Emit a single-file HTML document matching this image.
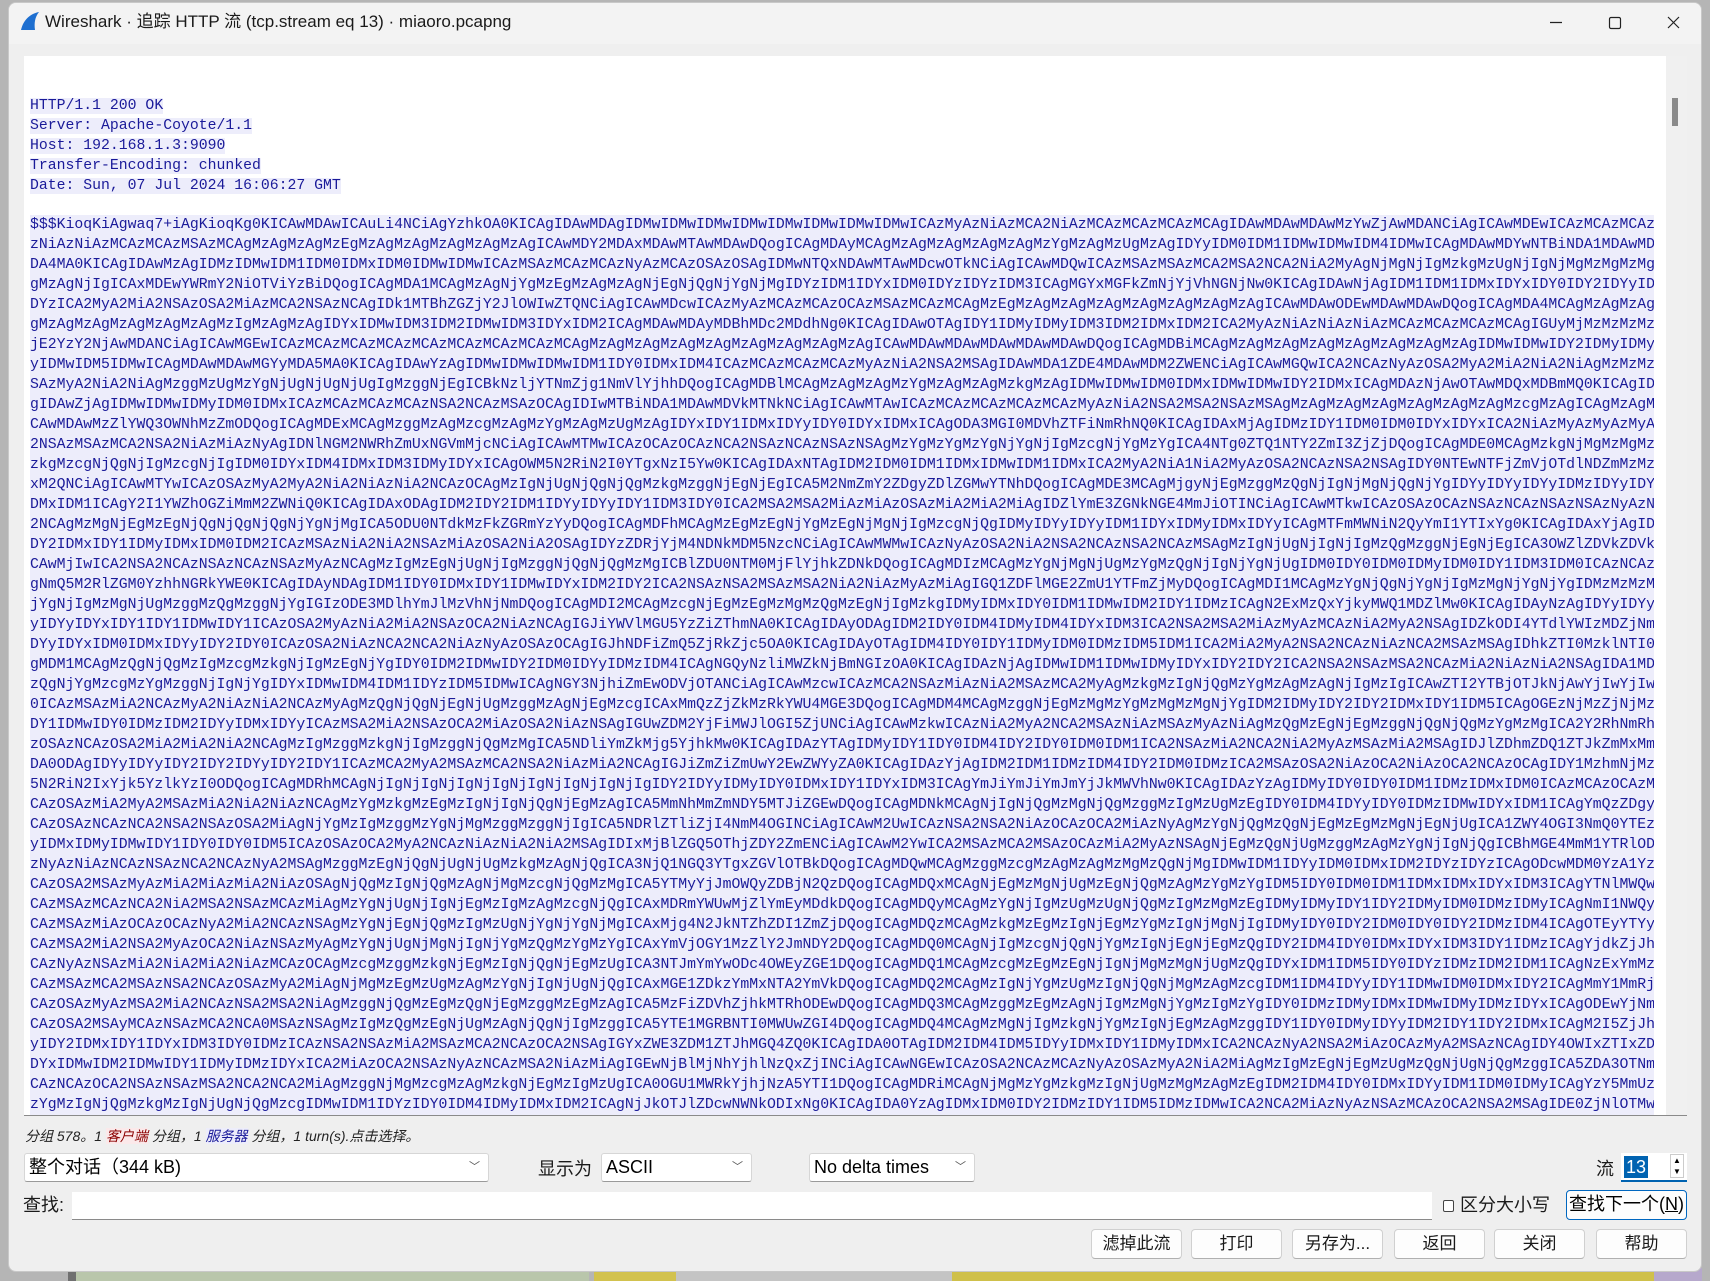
<!DOCTYPE html>
<html><head><meta charset="utf-8">
<style>
*{box-sizing:border-box;margin:0;padding:0}
body{width:1710px;height:1281px;overflow:hidden;background:#b5b5b5;position:relative;font-family:"Liberation Sans","Noto Sans CJK SC",sans-serif}
.strip{position:absolute;top:1268px;height:13px}
.win{position:absolute;left:8px;top:2px;width:1694px;height:1270px;background:#efefef;border:1px solid #c8c8c8;border-radius:8px;overflow:hidden}
.title{position:absolute;left:0;top:0;right:0;height:41px;background:#f3f3f3}
.title .t{position:absolute;left:36px;top:4px;font-size:17px;color:#1a1a1a}
.ctl{position:absolute;top:0;height:41px}
.panel{position:absolute;left:15px;top:53px;width:1663px;height:1060px;background:#fff;border-bottom:1px solid #8a8a8a;overflow:hidden}
.sb{position:absolute;left:1642px;top:0;width:21px;height:1060px;background:#f0f0f0}
.thumb{position:absolute;left:6px;top:42px;width:6px;height:28px;background:#8a8a8a}
.txt{position:absolute;left:6px;top:40px;font-family:"Liberation Mono","DejaVu Sans Mono",monospace;font-size:14.8px;line-height:20px;color:#1a1a99;white-space:pre}
.txt span{background:#ededfb}
.b64{position:absolute;left:6px;top:159px;width:1624px;height:901px;font-family:"Liberation Mono","DejaVu Sans Mono",monospace;font-size:14.8px;line-height:20px;color:#1a1a99;white-space:pre;background:#ededfb;overflow:hidden}
.ui{position:absolute;font-size:17px;color:#1a1a1a}
.combo{position:absolute;background:#fff;border:1px solid #d6d6d6;border-bottom:1px solid #9a9a9a;border-radius:3px;font-size:18px;padding:0 0 0 4px;line-height:27px;height:29px}
.combo i{position:absolute;right:8px;top:0;font-style:normal;font-size:11px;color:#555}
.btn{position:absolute;top:1226px;height:30px;background:#fdfdfd;border:1px solid #d0d0d0;border-bottom:1px solid #b0b0b0;border-radius:4px;font-size:17px;text-align:center;line-height:28px;color:#1a1a1a}
</style></head><body>
<div class="strip" style="left:68px;width:8px;background:#707070"></div>
<div class="strip" style="left:76px;width:513px;background:#b9c6ab"></div>
<div class="strip" style="left:594px;width:82px;background:#d2c24e"></div>
<div class="strip" style="left:676px;width:276px;background:#c4c4c4"></div>
<div class="strip" style="left:952px;width:702px;background:#cfc04a"></div>
<div class="strip" style="left:1654px;width:48px;background:#b6a8cc"></div>
<div class="win">
 <div class="title">
  <svg style="position:absolute;left:10px;top:8px" width="22" height="20" viewBox="0 0 22 20"><path d="M2 19 C4 10 10 3 20 1 C16 6 15 12 16 19 Z" fill="#1e6fd0"/></svg>
  <div class="t">Wireshark · 追踪 HTTP 流 (tcp.stream eq 13) · miaoro.pcapng</div>
  <svg class="ctl" style="left:1540px" width="150" height="41"><line x1="1" y1="19.5" x2="13" y2="19.5" stroke="#222" stroke-width="1.2"/><rect x="60.5" y="14.5" width="11" height="11" rx="1.5" fill="none" stroke="#222" stroke-width="1.2"/><path d="M119 14 L130 25 M130 14 L119 25" stroke="#222" stroke-width="1.2"/></svg>
 </div>
 <div class="panel">
  <div class="txt"><span>HTTP/1.1 200 OK</span>
<span>Server: Apache-Coyote/1.1</span>
<span>Host: 192.168.1.3:9090</span>
<span>Transfer-Encoding: chunked</span>
<span>Date: Sun, 07 Jul 2024 16:06:27 GMT</span></div>
  <div class="b64">$$$KioqKiAgwaq7+iAgKioqKg0KICAwMDAwICAuLi4NCiAgYzhkOA0KICAgIDAwMDAgIDMwIDMwIDMwIDMwIDMwIDMwIDMwIDMwICAzMyAzNiAzMCA2NiAzMCAzMCAzMCAzMCAgIDAwMDAwMDAwMzYwZjAwMDANCiAgICAwMDEwICAzMCAzMCAzMCAzMCAz
zNiAzNiAzMCAzMCAzMSAzMCAgMzAgMzAgMzEgMzAgMzAgMzAgMzAgMzAgICAwMDY2MDAxMDAwMTAwMDAwDQogICAgMDAyMCAgMzAgMzAgMzAgMzAgMzYgMzAgMzUgMzAgIDYyIDM0IDM1IDMwIDMwIDM4IDMwICAgMDAwMDYwNTBiNDA1MDAwMDAw
DA4MA0KICAgIDAwMzAgIDMzIDMwIDM1IDM0IDMxIDM0IDMwIDMwICAzMSAzMCAzMCAzNyAzMCAzOSAzOSAgIDMwNTQxNDAwMTAwMDcwOTkNCiAgICAwMDQwICAzMSAzMSAzMCA2MSA2NCA2NiA2MyAgNjMgNjIgMzkgMzUgNjIgNjMgMzMgMzMgMzMg
gMzAgNjIgICAxMDEwYWRmY2NiOTViYzBiDQogICAgMDA1MCAgMzAgNjYgMzEgMzAgMzAgNjEgNjQgNjYgNjMgIDYzIDM1IDYxIDM0IDYzIDYzIDM3ICAgMGYxMGFkZmNjYjVhNGNjNw0KICAgIDAwNjAgIDM1IDM1IDMxIDYxIDY0IDY2IDYyIDYy
DYzICA2MyA2MiA2NSAzOSA2MiAzMCA2NSAzNCAgIDk1MTBhZGZjY2JlOWIwZTQNCiAgICAwMDcwICAzMyAzMCAzMCAzOCAzMSAzMCAzMCAgMzEgMzAgMzAgMzAgMzAgMzAgMzAgMzAgICAwMDAwODEwMDAwMDAwDQogICAgMDA4MCAgMzAgMzAgMzAg
gMzAgMzAgMzAgMzAgMzAgMzIgMzAgMzAgIDYxIDMwIDM3IDM2IDMwIDM3IDYxIDM2ICAgMDAwMDAyMDBhMDc2MDdhNg0KICAgIDAwOTAgIDY1IDMyIDMyIDM3IDM2IDMxIDM2ICA2MyAzNiAzNiAzNiAzMCAzMCAzMCAzMCAgIGUyMjMzMzMzMzMz
jE2YzY2NjAwMDANCiAgICAwMGEwICAzMCAzMCAzMCAzMCAzMCAzMCAzMCAzMCAgMzAgMzAgMzAgMzAgMzAgMzAgMzAgMzAgICAwMDAwMDAwMDAwMDAwMDAwDQogICAgMDBiMCAgMzAgMzAgMzAgMzAgMzAgMzAgMzAgIDMwIDMwIDY2IDMyIDMy
yIDMwIDM5IDMwICAgMDAwMDAwMGYyMDA5MA0KICAgIDAwYzAgIDMwIDMwIDMwIDM1IDY0IDMxIDM4ICAzMCAzMCAzMCAzMyAzNiA2NSA2MSAgIDAwMDA1ZDE4MDAwMDM2ZWENCiAgICAwMGQwICA2NCAzNyAzOSA2MyA2MiA2NiA2NiAgMzMzMzMz
SAzMyA2NiA2NiAgMzggMzUgMzYgNjUgNjUgNjUgIgMzggNjEgICBkNzljYTNmZjg1NmVlYjhhDQogICAgMDBlMCAgMzAgMzAgMzYgMzAgMzAgMzkgMzAgIDMwIDMwIDM0IDMxIDMwIDMwIDY2IDMxICAgMDAzNjAwOTAwMDQxMDBmMQ0KICAgIDAwMDAw
gIDAwZjAgIDMwIDMwIDMyIDM0IDMxICAzMCAzMCAzMCAzNSA2NCAzMSAzOCAgIDIwMTBiNDA1MDAwMDVkMTNkNCiAgICAwMTAwICAzMCAzMCAzMCAzMCAzMyAzNiA2NSA2MSA2NSAzMSAgMzAgMzAgMzAgMzAgMzAgMzAgMzcgMzAgICAgMzAgMzAg
CAwMDAwMzZlYWQ3OWNhMzZmODQogICAgMDExMCAgMzggMzAgMzcgMzAgMzYgMzAgMzUgMzAgIDYxIDY1IDMxIDYyIDY0IDYxIDMxICAgODA3MGI0MDVhZTFiNmRhNQ0KICAgIDAxMjAgIDMzIDY1IDM0IDM0IDYxIDYxICA2NiAzMyAzMyAzMyAz
2NSAzMSAzMCA2NSA2NiAzMiAzNyAgIDNlNGM2NWRhZmUxNGVmMjcNCiAgICAwMTMwICAzOCAzOCAzNCA2NSAzNCAzNSAzNSAgMzYgMzYgMzYgNjYgNjIgMzcgNjYgMzYgICA4NTg0ZTQ1NTY2ZmI3ZjZjDQogICAgMDE0MCAgMzkgNjMgMzMgMzMg
zkgMzcgNjQgNjIgMzcgNjIgIDM0IDYxIDM4IDMxIDM3IDMyIDYxICAgOWM5N2RiN2I0YTgxNzI5Yw0KICAgIDAxNTAgIDM2IDM0IDM1IDMxIDMwIDM1IDMxICA2MyA2NiA1NiA2MyAzOSA2NCAzNSA2NSAgIDY0NTEwNTFjZmVjOTdlNDZmMzMzMzMz
xM2QNCiAgICAwMTYwICAzOSAzMyA2MyA2NiA2NiAzNiA2NCAzOCAgMzIgNjUgNjQgNjQgMzkgMzggNjEgNjEgICA5M2NmZmY2ZDgyZDlZGMwYTNhDQogICAgMDE3MCAgMjgyNjEgMzggMzQgNjIgNjMgNjQgNjYgIDYyIDYyIDYyIDMzIDYyIDYyIDYy
DMxIDM1ICAgY2I1YWZhOGZiMmM2ZWNiQ0KICAgIDAxODAgIDM2IDY2IDM1IDYyIDYyIDY1IDM3IDY0ICA2MSA2MSA2MiAzMiAzOSAzMiA2MiA2MiAgIDZlYmE3ZGNkNGE4MmJiOTINCiAgICAwMTkwICAzOSAzOCAzNSAzNCAzNSAzNSAzNyAzNyAz
2NCAgMzMgNjEgMzEgNjQgNjQgNjQgNjYgNjMgICA5ODU0NTdkMzFkZGRmYzYyDQogICAgMDFhMCAgMzEgMzEgNjYgMzEgNjMgNjIgMzcgNjQgIDMyIDYyIDYyIDM1IDYxIDMyIDMxIDYyICAgMTFmMWNiN2QyYmI1YTIxYg0KICAgIDAxYjAgIDMyIDMy
DY2IDMxIDY1IDMyIDMxIDM0IDM2ICAzMSAzNiA2NiA2NSAzMiAzOSA2NiA2OSAgIDYzZDRjYjM4NDNkMDM5NzcNCiAgICAwMWMwICAzNyAzOSA2NiA2NSA2NCAzNSA2NCAzMSAgMzIgNjUgNjIgNjIgMzQgMzggNjEgNjEgICA3OWZlZDVkZDVkZDVk
CAwMjIwICA2NSA2NCAzNSAzNCAzNSAzMyAzNCAgMzIgMzEgNjUgNjIgMzggNjQgNjQgMzMgICBlZDU0NTM0MjFlYjhkZDNkDQogICAgMDIzMCAgMzYgNjMgNjUgMzYgMzQgNjIgNjYgNjUgIDM0IDY0IDM0IDMyIDM0IDY1IDM3IDM0ICAzNCAzNCAz
gNmQ5M2RlZGM0YzhhNGRkYWE0KICAgIDAyNDAgIDM1IDY0IDMxIDY1IDMwIDYxIDM2IDY2ICA2NSAzNSA2MSAzMSA2NiA2NiAzMyAzMiAgIGQ1ZDFlMGE2ZmU1YTFmZjMyDQogICAgMDI1MCAgMzYgNjQgNjYgNjIgMzMgNjYgNjYgIDMzMzMzMzMz
jYgNjIgMzMgNjUgMzggMzQgMzggNjYgIGIzODE3MDlhYmJlMzVhNjNmDQogICAgMDI2MCAgMzcgNjEgMzEgMzMgMzQgMzEgNjIgMzkgIDMyIDMxIDY0IDM1IDMwIDM2IDY1IDMzICAgN2ExMzQxYjkyMWQ1MDZlMw0KICAgIDAyNzAgIDYyIDYyIDYy
yIDYyIDYxIDY1IDY1IDMwIDY1ICAzOSA2MyAzNiA2MiA2NSAzOCA2NiAzNCAgIGJiYWVlMGU5YzZiZThmNA0KICAgIDAyODAgIDM2IDY0IDM4IDMyIDM4IDYxIDM3ICA2NSA2MSA2MiAzMyAzMCAzNiA2MyA2NSAgIDZkODI4YTdlYWIzMDZjNmM2NmM2
DYyIDYxIDM0IDMxIDYyIDY2IDY0ICAzOSA2NiAzNCA2NCA2NiAzNyAzOSAzOCAgIGJhNDFiZmQ5ZjRkZjc5OA0KICAgIDAyOTAgIDM4IDY0IDY1IDMyIDM0IDMzIDM5IDM1ICA2MiA2MyA2NSA2NCAzNiAzNCA2MSAzMSAgIDhkZTI0MzklNTI0MzklN
gMDM1MCAgMzQgNjQgMzIgMzcgMzkgNjIgMzEgNjYgIDY0IDM2IDMwIDY2IDM0IDYyIDMzIDM4ICAgNGQyNzliMWZkNjBmNGIzOA0KICAgIDAzNjAgIDMwIDM1IDMwIDMyIDYxIDY2IDY2ICA2NSA2NSAzMSA2NCAzMiA2NiAzNiA2NSAgIDA1MDA1MDA1
zQgNjYgMzcgMzYgMzggNjIgNjYgIDYxIDMwIDM4IDM1IDYzIDM5IDMwICAgNGY3NjhiZmEwODVjOTANCiAgICAwMzcwICAzMCA2NSAzMiAzNiA2MSAzMCA2MyAgMzkgMzIgNjQgMzYgMzAgMzAgNjIgMzIgICAwZTI2YTBjOTJkNjAwYjIwYjIwYjIw
0ICAzMSAzMiA2NCAzMyA2NiAzNiA2NCAzMyAgMzQgNjQgNjEgNjUgMzggMzAgNjEgMzcgICAxMmQzZjZkMzRkYWU4MGE3DQogICAgMDM4MCAgMzggNjEgMzMgMzYgMzMgMzMgNjYgIDM2IDMyIDY2IDY2IDMxIDY1IDM5ICAgOGEzNjMzZjNjMzZjNjMz
DY1IDMwIDY0IDMzIDM2IDYyIDMxIDYyICAzMSA2MiA2NSAzOCA2MiAzOSA2NiAzNSAgIGUwZDM2YjFiMWJlOGI5ZjUNCiAgICAwMzkwICAzNiA2MyA2NCA2MSAzNiAzMSAzMyAzNiAgMzQgMzEgNjEgMzggNjQgNjQgMzYgMzMgICA2Y2RhNmRhNmRh
zOSAzNCAzOSA2MiA2MiA2NiA2NCAgMzIgMzggMzkgNjIgMzggNjQgMzMgICA5NDliYmZkMjg5YjhkMw0KICAgIDAzYTAgIDMyIDY1IDY0IDM4IDY2IDY0IDM0IDM1ICA2NSAzMiA2NCA2NiA2MyAzMSAzMiA2MSAgIDJlZDhmZDQ1ZTJkZmMxMmExMmEx
DA0ODAgIDYyIDYyIDY2IDY2IDYyIDY2IDY1ICAzMCA2MyA2MSAzMCA2NSA2NiAzMiA2NCAgIGJiZmZiZmUwY2EwZWYyZA0KICAgIDAzYjAgIDM2IDM1IDMzIDM4IDY2IDM0IDMzICA2MSAzOSA2NiAzOCA2NiAzOCA2NCAzOCAgIDY1MzhmNjMzNjMz
5N2RiN2IxYjk5YzlkYzI0ODQogICAgMDRhMCAgNjIgNjIgNjIgNjIgNjIgNjIgNjIgNjIgIDY2IDYyIDMyIDY0IDMxIDY1IDYxIDM3ICAgYmJiYmJiYmJmYjJkMWVhNw0KICAgIDAzYzAgIDMyIDY0IDY0IDM1IDMzIDMxIDM0ICAzMCAzOCAzMyAzMyAz
CAzOSAzMiA2MyA2MSAzMiA2NiA2NiAzNCAgMzYgMzkgMzEgMzIgNjIgNjQgNjEgMzAgICA5MmNhMmZmNDY5MTJiZGEwDQogICAgMDNkMCAgNjIgNjQgMzMgNjQgMzggMzIgMzUgMzEgIDY0IDM4IDYyIDY0IDMzIDMwIDYxIDM1ICAgYmQzZDgyNTgyNTgy
CAzOSAzNCAzNCA2NSA2NSAzOSA2MiAgNjYgMzIgMzggMzYgNjMgMzggMzggNjIgICA5NDRlZTliZjI4NmM4OGINCiAgICAwM2UwICAzNSA2NSA2NiAzOCAzOCA2MiAzNyAgMzYgNjQgMzQgNjEgMzEgMzMgNjEgNjUgICA1ZWY4OGI3NmQ0YTEzYTEzYTEz
yIDMxIDMyIDMwIDY1IDY0IDY0IDM5ICAzOSAzOCA2MyA2NCAzNiAzNiA2NiA2MSAgIDIxMjBlZGQ5OThjZDY2ZmENCiAgICAwM2YwICA2MSAzMCA2MSAzOCAzMiA2MyAzNSAgNjEgMzQgNjUgMzggMzAgMzYgNjIgNjQgICBhMGE4MmM1YTRlODA4MDA4
zNyAzNiAzNCAzNSAzNCA2NCAzNyA2MSAgMzggMzEgNjQgNjUgNjUgMzkgMzAgNjQgICA3NjQ1NGQ3YTgxZGVlOTBkDQogICAgMDQwMCAgMzggMzcgMzAgMzAgMzMgMzQgNjMgIDMwIDM1IDYyIDM0IDMxIDM2IDYzIDYzICAgODcwMDM0YzA1YzA1YzA1
CAzOSA2MSAzMyAzMiA2MiAzMiA2NiAzOSAgNjQgMzIgNjQgMzAgNjMgMzcgNjQgMzMgICA5YTMyYjJmOWQyZDBjN2QzDQogICAgMDQxMCAgNjEgMzMgNjUgMzEgNjQgMzAgMzYgMzYgIDM5IDY0IDM0IDM1IDMxIDMxIDYxIDM3ICAgYTNlMWQwMWQwMWQw
CAzMSAzMCAzNCA2NiA2MSA2NSAzMCAzMiAgMzYgNjUgNjIgNjEgMzIgMzAgMzcgNjQgICAxMDRmYWUwMjZlYmEyMDdkDQogICAgMDQyMCAgMzYgNjIgMzUgMzUgNjQgMzIgMzMgMzEgIDMyIDMyIDY1IDY2IDMyIDM0IDMzIDMyICAgNmI1NWQyNWQyNWQy
CAzMSAzMiAzOCAzOCAzNyA2MiA2NCAzNSAgMzYgNjEgNjQgMzIgMzUgNjYgNjYgNjMgICAxMjg4N2JkNTZhZDI1ZmZjDQogICAgMDQzMCAgMzkgMzEgMzIgNjEgMzYgMzIgNjMgNjIgIDMyIDY0IDY2IDM0IDY0IDY2IDMzIDM4ICAgOTEyYTYyY2IyY2Iy
CAzMSA2MiA2NSA2MyAzOCA2NiAzNSAzMyAgMzYgNjUgNjMgNjIgNjYgMzQgMzYgMzYgICAxYmVjOGY1MzZlY2JmNDY2DQogICAgMDQ0MCAgNjIgMzcgNjQgNjYgMzIgNjEgNjEgMzQgIDY2IDM4IDY0IDMxIDYxIDM3IDY1IDMzICAgYjdkZjJhZjJhZjJh
CAzNyAzNSAzMiA2NiA2MiA2NiAzMCAzOCAgMzcgMzggMzkgNjEgMzIgNjQgNjEgMzUgICA3NTJmYmYwODc4OWEyZGE1DQogICAgMDQ1MCAgMzcgMzEgMzEgNjIgNjMgMzMgNjUgMzQgIDYxIDM1IDM5IDY0IDYzIDMzIDM2IDM1ICAgNzExYmMzZTMzZTMz
CAzMSAzMCA2MSAzNSA2NCAzOSAzMyA2MiAgNjMgMzEgMzUgMzAgMzYgNjIgNjUgNjQgICAxMGE1ZDkzYmMxNTA2YmVkDQogICAgMDQ2MCAgMzIgNjYgMzUgMzIgNjQgNjMgMzAgMzcgIDM1IDM4IDYyIDY1IDMwIDM0IDMxIDY2ICAgMmY1MmRjMDMDMDMD
CAzOSAzMyAzMSA2MiA2NCAzNSA2MSA2NiAgMzggNjQgMzEgMzQgNjEgMzggMzEgMzAgICA5MzFiZDVhZjhkMTRhODEwDQogICAgMDQ3MCAgMzggMzEgMzAgNjIgMzMgNjYgMzIgMzYgIDY0IDMzIDMyIDMxIDMwIDMyIDMzIDYxICAgODEwYjNmMjZmMjZm
CAzOSA2MSAyMCAzNSAzMCA2NCA0MSAzNSAgMzIgMzQgMzEgNjUgMzAgNjQgNjIgMzggICA5YTE1MGRBNTI0MWUwZGI4DQogICAgMDQ4MCAgMzMgNjIgMzkgNjYgMzIgNjEgMzAgMzggIDY1IDY0IDMyIDYyIDM2IDY1IDY2IDMxICAgM2I5ZjJhM2I5ZjJh
yIDY2IDMxIDY1IDYxIDM3IDY0IDMzICAzNSA2NSAzMiA2MSAzMCA2NCAzOCA2NSAgIGYxZWE3ZDM1ZTJhMGQ4ZQ0KICAgIDA0OTAgIDM2IDM4IDM5IDYyIDMxIDY1IDMyIDMxICA2NCAzNyA2NSA2MiAzOCAzMyA2MSAzNCAgIDY4OWIxZTIxZDdlYjgzYTQ
DYxIDMwIDM2IDMwIDY1IDMyIDMzIDYxICA2MiAzOCA2NSAzNyAzNCAzMSA2NiAzMiAgIGEwNjBlMjNhYjhlNzQxZjINCiAgICAwNGEwICAzOSA2NCAzMCAzNyAzOSAzMyA2NiA2MiAgMzIgMzEgNjEgMzUgMzQgNjUgNjQgMzggICA5ZDA3OTNmYjIxYTU0ZWQ4
CAzNCAzOCA2NSAzNSAzMSA2NCA2NCA2MiAgMzggNjMgMzcgMzAgMzkgNjEgMzIgMzUgICA0OGU1MWRkYjhjNzA5YTI1DQogICAgMDRiMCAgNjMgMzYgMzkgMzIgNjUgMzMgMzAgMzEgIDM2IDM4IDY0IDMxIDYyIDM1IDM0IDMyICAgYzY5MmUzMDE2OGQxYjU0Mg
zYgMzIgNjQgMzkgMzIgNjUgNjQgMzcgIDMwIDM1IDYzIDY0IDM4IDMyIDMxIDM2ICAgNjJkOTJlZDcwNWNkODIxNg0KICAgIDA0YzAgIDMxIDM0IDY2IDMzIDY1IDM5IDMzIDMwICA2NCA2MiAzNyAzNSAzMCAzOCA2NSA2MSAgIDE0ZjNlOTMwZGI3NTA4ZWEgIDA0ZDA
CAzMiA2NSA2MSAzNiAzNCAzNyA2NCAzOSAgNjQgMzEgNjMgNjYgMzIgMzggMzAgMzUgICAyZWE2NDdkOWQxY2YyODA1DQogICAgMDRkMCAgMzQgMzYgNjUgNjQgMzcgMzEgMzggNjIgIDY1IDMwIDM5IDY0IDMzIDYxIDMyIDMzICAgNDZlZDcxOGJlMDlkM2EyMw</div>
  <div class="sb"><div class="thumb"></div></div>
 </div>
 <div class="ui" style="left:16px;top:1123px;font-size:14px;font-style:italic;color:#222">分组 578。1 <span style="color:#8b0000;background:#fbe9ea">客户端</span> 分组，1 <span style="color:#1a1a99;background:#ededfb">服务器</span> 分组，1 turn(s).点击选择。</div>
 <div class="combo" style="left:15px;top:1150px;width:465px">整个对话（344 kB)<i>﹀</i></div>
 <div class="ui" style="left:529px;top:1152px;font-size:18px">显示为</div>
 <div class="combo" style="left:592px;top:1150px;width:151px">ASCII<i>﹀</i></div>
 <div class="combo" style="left:800px;top:1150px;width:166px">No delta times<i>﹀</i></div>
 <div class="ui" style="left:1587px;top:1152px;font-size:18px">流</div>
 <div style="position:absolute;left:1612px;top:1150px;width:66px;height:29px;background:#fff;border-bottom:2px solid #0063b1">
  <span style="position:absolute;left:3px;top:3px;background:#0063b1;color:#fff;font-size:18px;line-height:22px;padding:0 2px">13</span>
  <div style="position:absolute;right:3px;top:1px;width:14px;height:24px;border:1px solid #ccc;font-size:8px;line-height:11px;text-align:center">▲<br>▼</div>
 </div>
 <div class="ui" style="left:14px;top:1188px;font-size:18px">查找:</div>
 <div style="position:absolute;left:63px;top:1189px;width:1360px;height:28px;background:#fff;border-bottom:1px solid #8a8a8a"></div>
 <div style="position:absolute;left:1434px;top:1197px;width:11px;height:12px;border:1px solid #444;border-radius:2px;background:#fff"></div>
 <div class="ui" style="left:1451px;top:1188px;font-size:18px">区分大小写</div>
 <div style="position:absolute;left:1557px;top:1187px;width:121px;height:30px;background:#fdfdfd;border:1px solid #0067c0;border-radius:4px;font-size:18px;line-height:27px;text-align:center">查找下一个(<u>N</u>)</div>
 <div class="btn" style="left:1082px;width:91px">滤掉此流</div>
 <div class="btn" style="left:1182px;width:91px">打印</div>
 <div class="btn" style="left:1283px;width:91px">另存为...</div>
 <div class="btn" style="left:1385px;width:91px">返回</div>
 <div class="btn" style="left:1485px;width:91px">关闭</div>
 <div class="btn" style="left:1587px;width:91px">帮助</div>
</div>
</body></html>
